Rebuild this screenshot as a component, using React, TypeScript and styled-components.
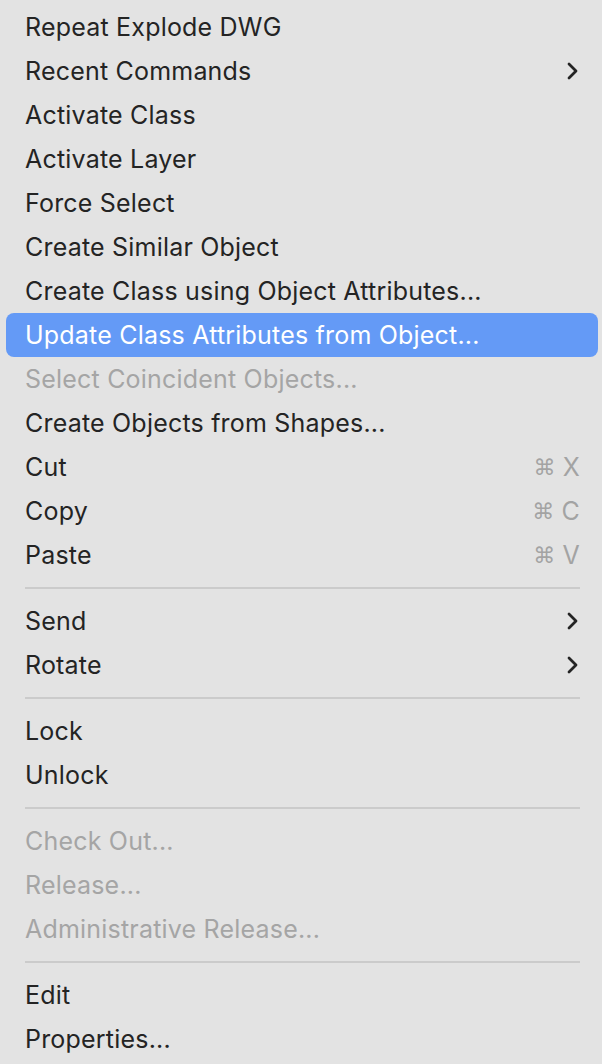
import React from 'react';
import styled, { createGlobalStyle } from 'styled-components';

const GlobalStyle = createGlobalStyle`
  html, body {
    margin: 0;
    padding: 0;
    background: #e3e3e3;
  }
`;

const Menu = styled.div`
  box-sizing: border-box;
  width: 602px;
  min-height: 1064px;
  padding: 5px 4px 0 6px;
  background: #e3e3e3;
  font-family: Inter, 'Noto Sans', sans-serif;
  font-size: 25px;
  color: #242424;
  display: flex;
  flex-direction: column;
`;

const Item = styled.div<{ $active?: boolean; $disabled?: boolean }>`
  height: 44px;
  display: flex;
  align-items: center;
  justify-content: space-between;
  padding: 0 18px 0 19px;
  border-radius: 8px;
  background: ${(p) => (p.$active ? '#649af6' : 'transparent')};
  color: ${(p) => (p.$active ? '#ffffff' : p.$disabled ? '#a5a5a5' : '#242424')};
  letter-spacing: 0.2px;
`;

const Shortcut = styled.span`
  display: flex;
  align-items: center;
  gap: 7px;
  color: #a3a3a3;
  font-size: 25px;
`;

const Cmd = styled.span`
  font-family: 'DejaVu Sans', sans-serif;
  font-size: 22px;
`;

const Separator = styled.div`
  height: 22px;
  display: flex;
  align-items: center;
  padding: 0 18px 0 19px;

  &::after {
    content: '';
    flex: 1;
    height: 2px;
    background: #cbcbcb;
  }
`;

const Chevron = () => (
  <svg width="14" height="18" viewBox="0 0 14 18" fill="none">
    <polyline points="3,2 10,9 3,16" stroke="#242424" strokeWidth="2.8" strokeLinecap="round" strokeLinejoin="round" />
  </svg>
);

type Entry =
  | { sep: true }
  | { label: string; sub?: boolean; key?: string; active?: boolean; disabled?: boolean };

const entries: Entry[] = [
  { label: 'Repeat Explode DWG' },
  { label: 'Recent Commands', sub: true },
  { label: 'Activate Class' },
  { label: 'Activate Layer' },
  { label: 'Force Select' },
  { label: 'Create Similar Object' },
  { label: 'Create Class using Object Attributes...' },
  { label: 'Update Class Attributes from Object...', active: true },
  { label: 'Select Coincident Objects...', disabled: true },
  { label: 'Create Objects from Shapes...' },
  { label: 'Cut', key: 'X' },
  { label: 'Copy', key: 'C' },
  { label: 'Paste', key: 'V' },
  { sep: true },
  { label: 'Send', sub: true },
  { label: 'Rotate', sub: true },
  { sep: true },
  { label: 'Lock' },
  { label: 'Unlock' },
  { sep: true },
  { label: 'Check Out...', disabled: true },
  { label: 'Release...', disabled: true },
  { label: 'Administrative Release...', disabled: true },
  { sep: true },
  { label: 'Edit' },
  { label: 'Properties...' },
];

export default function App() {
  return (
    <>
      <GlobalStyle />
      <Menu>
        {entries.map((e, i) =>
          'sep' in e ? (
            <Separator key={i} />
          ) : (
            <Item key={i} $active={e.active} $disabled={e.disabled}>
              <span>{e.label}</span>
              {e.sub && <Chevron />}
              {e.key && (
                <Shortcut>
                  <Cmd>⌘</Cmd>
                  {e.key}
                </Shortcut>
              )}
            </Item>
          )
        )}
      </Menu>
    </>
  );
}
